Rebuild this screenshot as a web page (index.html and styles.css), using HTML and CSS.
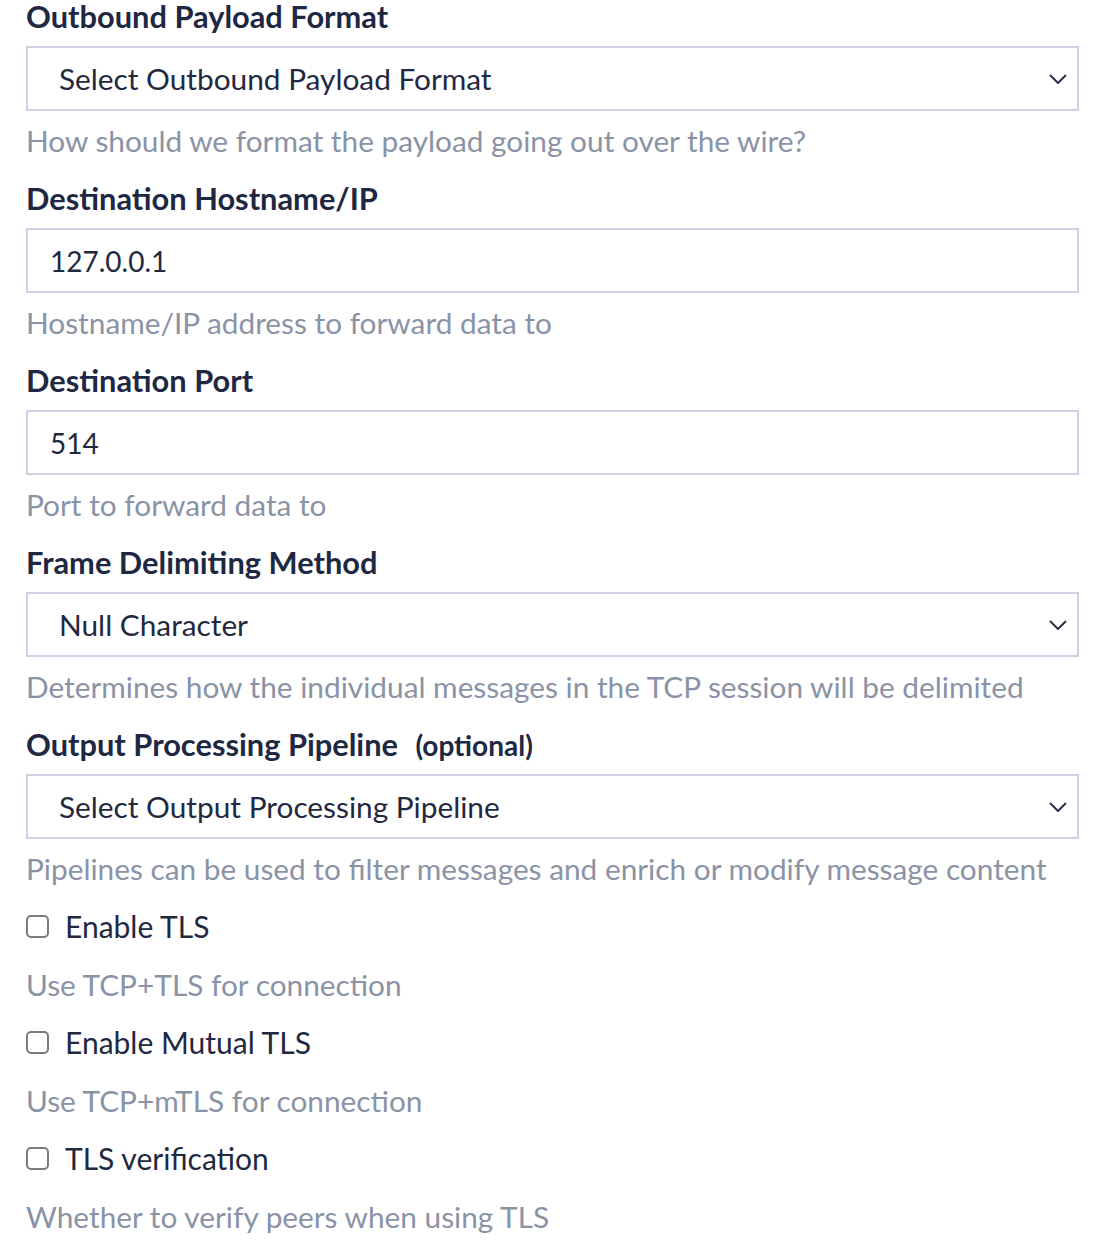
FILE: index.html
```html
<!DOCTYPE html>
<html>
<head>
<meta charset="utf-8">
<link rel="stylesheet" href="styles.css">
</head>
<body>
<form class="form">
  <div class="field">
    <label class="label">Outbound Payload Format</label>
    <div class="select">
      <span class="select-text">Select Outbound Payload Format</span>
      <svg class="chevron" width="18" height="10" viewBox="0 0 18 10"><path d="M1 1 L9 9 L17 1" fill="none" stroke="#2a3147" stroke-width="2"/></svg>
    </div>
    <p class="help">How should we format the payload going out over the wire?</p>
  </div>
  <div class="field">
    <label class="label">Destination Hostname/IP</label>
    <div class="input">127.0.0.1</div>
    <p class="help">Hostname/IP address to forward data to</p>
  </div>
  <div class="field">
    <label class="label">Destination Port</label>
    <div class="input">514</div>
    <p class="help">Port to forward data to</p>
  </div>
  <div class="field">
    <label class="label">Frame Delimiting Method</label>
    <div class="select">
      <span class="select-text">Null Character</span>
      <svg class="chevron" width="18" height="10" viewBox="0 0 18 10"><path d="M1 1 L9 9 L17 1" fill="none" stroke="#2a3147" stroke-width="2"/></svg>
    </div>
    <p class="help">Determines how the individual messages in the TCP session will be delimited</p>
  </div>
  <div class="field field-last">
    <label class="label">Output Processing Pipeline <span class="optional">(optional)</span></label>
    <div class="select">
      <span class="select-text">Select Output Processing Pipeline</span>
      <svg class="chevron" width="18" height="10" viewBox="0 0 18 10"><path d="M1 1 L9 9 L17 1" fill="none" stroke="#2a3147" stroke-width="2"/></svg>
    </div>
    <p class="help">Pipelines can be used to filter messages and enrich or modify message content</p>
  </div>
  <div class="check-field">
    <div class="check-row"><span class="box"></span><span class="check-label">Enable TLS</span></div>
    <p class="help">Use TCP+TLS for connection</p>
  </div>
  <div class="check-field">
    <div class="check-row"><span class="box"></span><span class="check-label">Enable Mutual TLS</span></div>
    <p class="help">Use TCP+mTLS for connection</p>
  </div>
  <div class="check-field">
    <div class="check-row"><span class="box"></span><span class="check-label">TLS verification</span></div>
    <p class="help">Whether to verify peers when using TLS</p>
  </div>
</form>
</body>
</html>
```
FILE: styles.css
```css
* { box-sizing: border-box; }
body {
  margin: 0;
  background: #ffffff;
  font-family: Lato, "Open Sans", sans-serif;
  color: #1f2940;
}
.form {
  display: flex;
  flex-direction: column;
  padding: 0 29px 0 26px;
}
.field {
  display: flex;
  flex-direction: column;
  margin-bottom: 23px;
}
.field-last {
  margin-bottom: 21px;
}
.label {
  display: block;
  font-size: 30.8px;
  font-weight: 700;
  line-height: 34px;
  color: #1e2842;
  margin-bottom: 12px;
}
.optional {
  font-size: 28px;
  margin-left: 10px;
}
.select, .input {
  height: 65px;
  border: 2px solid #cdd1e4;
  display: flex;
  align-items: center;
  font-size: 29.8px;
  color: #1f2940;
}
.select {
  padding: 0 10px 0 31px;
  justify-content: space-between;
}
.input {
  padding: 0 22px;
  font-size: 28px;
}
.help {
  margin: 12px 0 0 0;
  font-size: 29.8px;
  line-height: 36px;
  color: #8a93a6;
}
.check-field {
  display: flex;
  flex-direction: column;
  margin-bottom: 21px;
}
.check-row {
  display: flex;
  align-items: center;
  height: 36px;
}
.box {
  width: 23px;
  height: 23px;
  border: 2px solid #7a7a7a;
  border-radius: 5px;
  margin-right: 16px;
  flex: none;
}
.check-label {
  font-size: 30px;
  line-height: 36px;
  color: #1f2940;
}
.check-field .help {
  margin-top: 23px;
}
```
